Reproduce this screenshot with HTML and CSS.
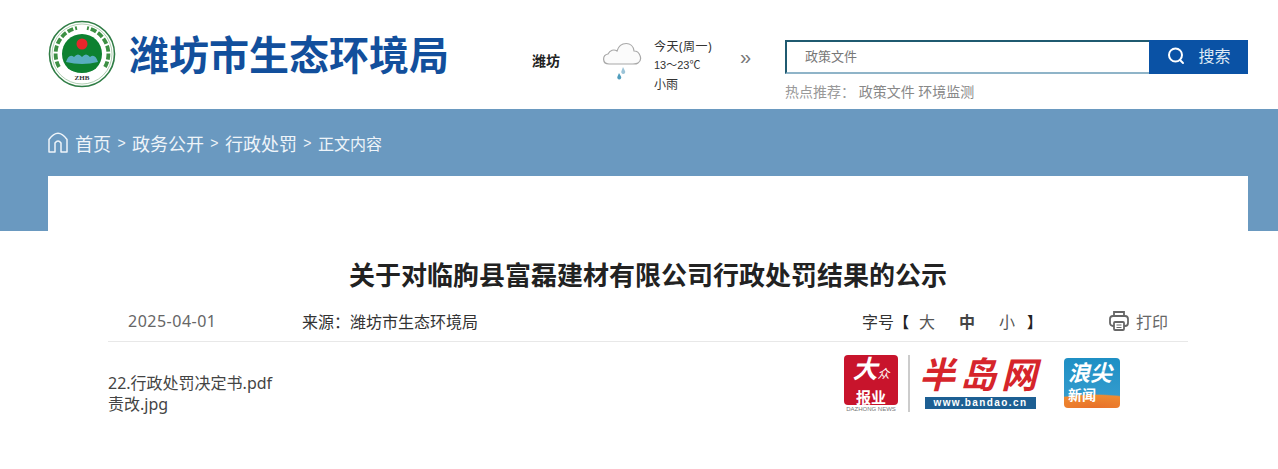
FILE: index.html
```html
<!DOCTYPE html>
<html lang="zh-CN">

<head>
    <meta charset="UTF-8">
    <meta name="viewport" content="width=device-width, initial-scale=1.0">
    <title>关于对临朐县富磊建材有限公司行政处罚结果的公示</title>
    <link rel="stylesheet" href="styles.css">
</head>

<body>
    <div id="header">
        <div class="brand">
            <svg class="emblem" width="68" height="68" viewBox="0 0 68 68">
                <circle cx="34" cy="34" r="32.500" fill="#fff" stroke="#2f7d45" stroke-width="1.600"/>
                <circle cx="34" cy="34" r="30" fill="none" stroke="#9cc3a0" stroke-width="0.800"/>
                <g fill="none" stroke="#3c8f43" stroke-width="3.800" stroke-dasharray="6 2">
                    <path d="M11 47 A26.500 26.500 0 0 1 29 8"/>
                    <path d="M57 47 A26.500 26.500 0 0 0 39 8"/>
                </g>
                <circle cx="34" cy="34" r="20" fill="#0d8130"/>
                <circle cx="34" cy="24" r="5.500" fill="#e8262b"/>
                <path d="M18 42 Q21 33 26 37 Q30 32 34 37 Q38 32 42 37 Q47 33 50 42 Q34 46 18 42Z" fill="#58aebf"/>
                <path d="M13 52 Q34 68 55 52 L51 47 Q34 59 17 47Z" fill="#fff"/>
                <text class="emblem-text" x="34" y="60" text-anchor="middle">ZHB</text>
            </svg>
            <div class="site-name">潍坊市生态环境局</div>
        </div>
        <div class="weather">
            <div class="city">潍坊</div>
            <svg class="cloud" width="40" height="42" viewBox="0 0 40 42">
                <path d="M7 24 C0 24 0 15 6 14 C8 10 12 9 15 11 C18 1 31 1 32 11 C38 11 41 20 36 23 C35 24 33 24 31 24Z" fill="#fbfbfb" stroke="#a8a8a8" stroke-width="1.200"/>
                <path d="M21 27 L23 31 A2 2 0 1 1 19.500 31Z" fill="#9cc4d8"/>
                <path d="M17 33 L19 36.500 A2 2 0 1 1 15.500 36.500Z" fill="#4f9dbd"/>
            </svg>
            <div class="forecast">
                <div class="today">今天(周一)</div>
                <div class="temp">13～23℃</div>
                <div>小雨</div>
            </div>
            <div class="more">»</div>
        </div>
        <div class="search-box">
            <div class="search-row">
                <div class="search-input">政策文件</div>
                <div class="search-btn">
                    <svg width="20" height="20" viewBox="0 0 20 20" fill="none" stroke="#fff" stroke-width="2">
                        <circle cx="9.500" cy="9" r="6.500"/>
                        <path d="M14 14 L17 17" stroke-linecap="round"/>
                    </svg>
                    <span>搜索</span>
                </div>
            </div>
            <div class="hot">热点推荐： <span class="hot-links">政策文件 环境监测</span></div>
        </div>
    </div>

    <div id="main">
        <div class="crumbs">
            <svg class="home" width="22" height="24" viewBox="0 0 22 24" fill="none" stroke="#eef4f9" stroke-width="1.500">
                <path d="M2 22 L2 9.500 Q11 -3 20 9.500 L20 22 L14 22 L14 13 Q11 9 8 13 L8 22Z" stroke-linejoin="round"/>
            </svg>
            <span>首页</span><i>&gt;</i><span>政务公开</span><i>&gt;</i><span>行政处罚</span><i>&gt;</i><span class="now">正文内容</span>
        </div>

        <div class="card">
            <h1>关于对临朐县富磊建材有限公司行政处罚结果的公示</h1>
            <div class="meta">
                <div class="date">2025-04-01</div>
                <div class="source">来源：潍坊市生态环境局</div>
                <div class="size">字号<b>【</b><span>大</span><span class="mid">中</span><span>小</span><b>】</b></div>
                <div class="print">
                    <svg width="22" height="22" viewBox="0 0 22 22" fill="none" stroke="#666" stroke-width="1.800">
                        <path d="M6 6 L6 2 L16 2 L16 6"/>
                        <rect x="2" y="6" width="18" height="10" rx="3"/>
                        <rect x="6" y="12" width="10" height="8" rx="1" fill="#fff"/>
                        <path d="M8.500 15 H13.500 M8.500 17.500 H13.500" stroke-width="1.200"/>
                    </svg>
                    <span>打印</span>
                </div>
            </div>
            <div class="body-row">
                <div class="files">
                    <div>22.行政处罚决定书.pdf</div>
                    <div>责改.jpg</div>
                </div>
                <div class="logos">
                    <div class="dazhong">
                        <div class="dz-tile">
                            <div class="dz-top">大<small>众</small></div>
                            <div class="dz-bottom">报业</div>
                        </div>
                        <div class="dz-caption">DAZHONG NEWS</div>
                    </div>
                    <div class="bandao">
                        <div class="bd-name">半岛网</div>
                        <div class="bd-url">www.bandao.cn</div>
                    </div>
                    <div class="langjian">
                        <div class="lj-top">浪尖</div>
                        <div class="lj-bottom">新闻</div>
                    </div>
                </div>
            </div>
        </div>
    </div>
</body>

</html>
```

FILE: styles.css
```css
body,
html {
    margin: 0;
    padding: 0;
    height: 100%;
    overflow: hidden;
    background-color: #fff;
    font-family: "Noto Sans", "Noto Sans CJK SC", sans-serif;
}

#header {
    height: 109px;
    box-sizing: border-box;
    display: flex;
    padding-left: 48px;
}

.brand {
    width: 484px;
    display: flex;
    align-items: center;
    gap: 13px;
}

.emblem {
    margin-bottom: 2px;
}

.emblem-text {
    font-family: "Liberation Serif", serif;
    font-size: 7px;
    font-weight: bold;
    fill: #333;
}

.site-name {
    font-size: 40px;
    line-height: 48px;
    font-weight: bold;
    color: #124f9c;
    white-space: nowrap;
}

.weather {
    width: 253px;
    display: flex;
    align-items: center;
    padding-top: 12px;
    box-sizing: border-box;
}

.city {
    width: 70px;
    font-size: 14px;
    font-weight: bold;
    color: #222;
    margin-bottom: 2px;
}

.cloud {
    margin-right: 12px;
}

.forecast {
    width: 86px;
    margin-top: 10px;
    font-size: 12px;
    line-height: 19px;
    color: #333;
}

.today {
    letter-spacing: 0.500px;
}

.temp {
    font-family: "Liberation Sans", "Noto Sans CJK SC", sans-serif;
    font-size: 11px;
}

.more {
    font-family: "Liberation Sans", sans-serif;
    font-size: 20px;
    color: #777;
    padding-bottom: 6px;
}

.search-box {
    width: 463px;
    padding-top: 40px;
}

.search-row {
    height: 34px;
    display: flex;
}

.search-input {
    flex-grow: 1;
    box-sizing: border-box;
    border: 2px solid #1f5a70;
    border-bottom-color: #8fb4c8;
    border-right: none;
    padding-left: 18px;
    font-size: 13px;
    line-height: 28px;
    color: #777;
}

.search-btn {
    width: 99px;
    background-color: #0a52a5;
    display: flex;
    align-items: center;
    justify-content: center;
    gap: 12px;
    color: #dfe9f4;
    font-size: 16px;
    line-height: 32px;
    padding-bottom: 2px;
    box-sizing: border-box;
}

.hot {
    margin-top: 8px;
    font-size: 14px;
    line-height: 19px;
    color: #999;
}

.hot-links {
    color: #888;
}

#main {
    height: 360px;
    background: linear-gradient(#6a99c0 122px, #fff 122px);
    padding: 0 30px 0 48px;
}

.crumbs {
    height: 67px;
    display: flex;
    align-items: center;
    color: #eef4f9;
    font-size: 18px;
}

.home {
    margin: 0 6px 2px -1px;
}

.crumbs i {
    font-family: "Liberation Sans", sans-serif;
    font-style: normal;
    font-size: 14px;
    margin: 0 6.400px;
}

.crumbs .now {
    font-size: 16px;
}

.card {
    height: 293px;
    background-color: #fff;
    padding: 0 60px;
}

h1 {
    margin: 0;
    padding-top: 81px;
    height: 36px;
    line-height: 36px;
    text-align: center;
    font-size: 26px;
    color: #222;
}

.meta {
    height: 49px;
    box-sizing: border-box;
    padding: 8px 0 0 20px;
    display: flex;
    align-items: center;
    font-size: 16px;
    border-bottom: 1px solid #e8e8e8;
}

.date {
    width: 174px;
    color: #666;
    letter-spacing: 0.500px;
}

.source {
    width: 560px;
    color: #333;
}

.size {
    width: 246px;
    color: #333;
    display: flex;
    align-items: center;
}

.size span {
    width: 40px;
    text-align: center;
    color: #555;
}

.size .mid {
    font-weight: bold;
    color: #444;
}

.size b {
    width: 13px;
    font-size: 15px;
    color: #222;
}

.print {
    display: flex;
    align-items: center;
    gap: 6px;
    color: #666;
}

.body-row {
    display: flex;
    justify-content: space-between;
    padding: 13px 68px 0 0;
}

.files {
    padding-top: 18px;
    font-size: 16px;
    line-height: 21px;
    color: #444;
}

.logos {
    display: flex;
    align-items: flex-start;
    font-family: "Liberation Sans", "Noto Sans CJK SC", sans-serif;
}

.dazhong {
    width: 56px;
    text-align: center;
    color: #fff;
    font-weight: bold;
}

.dz-tile {
    height: 50px;
    margin: 0 1px;
    background-color: #c8142c;
    border-radius: 4px;
}

.dz-top {
    font-family: "Liberation Serif", "Noto Sans CJK SC", serif;
    font-size: 25px;
    line-height: 30px;
    font-style: italic;
}

.dz-top small {
    font-size: 12px;
    font-weight: normal;
}

.dz-bottom {
    font-size: 15px;
    line-height: 17px;
}

.dz-caption {
    font-size: 6px;
    font-weight: normal;
    line-height: 8px;
    color: #777;
    white-space: nowrap;
}

.bandao {
    margin-left: 9px;
    padding-left: 9px;
    border-left: 2px solid #ccc;
    height: 57px;
    width: 122px;
    box-sizing: content-box;
}

.bd-name {
    font-size: 36px;
    line-height: 42px;
    font-weight: bold;
    font-style: italic;
    color: #d6252b;
    white-space: nowrap;
    letter-spacing: 5px;
}

.bd-url {
    margin: 0 5px 0 6px;
    background-color: #1d5f93;
    color: #fff;
    font-size: 10px;
    font-weight: bold;
    letter-spacing: 1.400px;
    line-height: 12px;
    text-align: center;
    white-space: nowrap;
}

.langjian {
    margin: 3px 0 0 23px;
    width: 56px;
    height: 50px;
    border-radius: 4px;
    background: radial-gradient(ellipse 60px 14px at 55% 100%, #e8702a 0, #ee8a30 90%, transparent 100%), linear-gradient(#1e8fc4, #3a9fd0);
    color: #fff;
    font-weight: bold;
    padding-left: 4px;
    box-sizing: border-box;
}

.lj-top {
    font-size: 22px;
    line-height: 27px;
    padding-top: 2px;
    font-style: italic;
}

.lj-bottom {
    font-size: 14px;
    line-height: 16px;
}
```
